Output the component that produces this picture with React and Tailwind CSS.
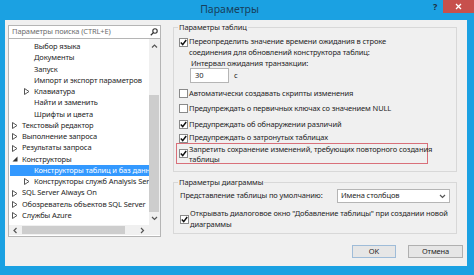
import React from "react";

const font = { fontFamily: '"Noto Sans", "Open Sans", sans-serif' };

const Check = ({ checked }) => (
  <span className="w-[9px] h-[9px] border border-[#8a8a8a] bg-white flex items-center justify-center shrink-0">
    {checked && (
      <svg width="7" height="7" viewBox="0 0 7 7">
        <path d="M0.8 3.6 L2.7 5.6 L6.2 1" stroke="#111" strokeWidth="1.5" fill="none" />
      </svg>
    )}
  </span>
);

const Arrow = ({ type, selected }) => {
  if (type === "closed")
    return (
      <svg width="6" height="7" viewBox="0 0 6 7">
        <path d="M0.5 0.5 L5 3.5 L0.5 6.5 Z" fill="none" stroke={selected ? "#fff" : "#555"} strokeWidth="1" />
      </svg>
    );
  if (type === "open")
    return (
      <svg width="6" height="6" viewBox="0 0 6 6">
        <path d="M5.5 0.5 L5.5 5.5 L0.5 5.5 Z" fill="#333" />
      </svg>
    );
  return null;
};

const rows = [
  { t: "Выбор языка", l: 2 },
  { t: "Документы", l: 2 },
  { t: "Запуск", l: 2 },
  { t: "Импорт и экспорт параметров", l: 2 },
  { t: "Клавиатура", l: 2, a: "closed" },
  { t: "Найти и заменить", l: 2 },
  { t: "Шрифты и цвета", l: 2 },
  { t: "Текстовый редактор", l: 1, a: "closed" },
  { t: "Выполнение запроса", l: 1, a: "closed" },
  { t: "Результаты запроса", l: 1, a: "closed" },
  { t: "Конструкторы", l: 1, a: "open" },
  { t: "Конструкторы таблиц и баз данных", l: 2, sel: true },
  { t: "Конструкторы служб Analysis Services", l: 2, a: "closed" },
  { t: "SQL Server Always On", l: 1, a: "closed" },
  { t: "Обозреватель объектов SQL Server", l: 1, a: "closed" },
  { t: "Службы Azure", l: 1, a: "closed" },
];

const Chevron = ({ dir }) => {
  const d = {
    up: "M1 4.5 L3.5 2 L6 4.5",
    down: "M1 2 L3.5 4.5 L6 2",
    left: "M4.5 1 L2 3.5 L4.5 6",
    right: "M2 1 L4.5 3.5 L2 6",
  }[dir];
  return (
    <svg width="7" height="7" viewBox="0 0 7 7">
      <path d={d} stroke="#555" strokeWidth="1.2" fill="none" />
    </svg>
  );
};

export default function App() {
  return (
    <div className="w-[474px] h-[275px] bg-[#1ba1e2] flex flex-col overflow-hidden text-[#1e1e1e] text-[7.5px] tracking-[-0.12px] whitespace-nowrap" style={font}>
      {/* title bar */}
      <div className="h-[20px] flex items-start shrink-0">
        <div className="flex-1 h-[20px] flex items-center justify-center text-[10.5px] tracking-normal text-[#173f5c] pl-[30px]">Параметры</div>
        <div className="w-[12px] h-[14px] flex items-center justify-center text-[9px] font-bold text-[#1b2f40] mr-[2px]">?</div>
        <div className="w-[31px] h-[13px] bg-[#c7504c] flex items-center justify-center">
          <svg width="7" height="7" viewBox="0 0 7 7">
            <path d="M1 1 L6 6 M6 1 L1 6" stroke="#fff" strokeWidth="1.3" />
          </svg>
        </div>
      </div>
      {/* body */}
      <div className="ml-[5px] mr-[7px] h-[246px] bg-[#f0f0f0] flex flex-col">
        <div className="flex">
          {/* left column */}
          <div className="pl-[3px] pt-[5px] w-[156px] flex flex-col">
            <div className="h-[14px] border border-[#b5b5b5] bg-white flex items-center pl-[3px] pr-[2px]">
              <span className="flex-1 text-[#6d6d6d]">Параметры поиска (CTRL+E)</span>
              <svg width="8" height="8" viewBox="0 0 8 8">
                <circle cx="5" cy="3" r="2.2" stroke="#333" strokeWidth="1.1" fill="none" />
                <path d="M3.4 4.6 L0.8 7.2" stroke="#333" strokeWidth="1.3" />
              </svg>
            </div>
            <div className="h-[198px] border border-[#b5b5b5] border-t-0 bg-white flex flex-col">
              <div className="h-[186px] flex">
                <div className="flex-1 overflow-hidden pt-[2px]">
                  {rows.map((r, i) => (
                    <div
                      key={i}
                      className={`h-[11.27px] flex items-center ${r.sel ? "bg-[#3399ff] text-white ml-[1px]" : ""}`}
                    >
                      <span className={r.l === 1 ? "w-[3px] shrink-0" : r.sel ? "w-[14px] shrink-0" : "w-[15px] shrink-0"} />
                      <span className="w-[10px] shrink-0 flex items-center">
                        <Arrow type={r.a} selected={r.sel} />
                      </span>
                      <span>{r.t}</span>
                    </div>
                  ))}
                </div>
                <div className="w-[11px] bg-[#f0f0f0] flex flex-col">
                  <div className="h-[15px] flex items-center justify-center">
                    <Chevron dir="up" />
                  </div>
                  <div className="h-[41px]" />
                  <div className="h-[117px] bg-[#cdcdcd] mr-[1px]" />
                  <div className="flex-1 flex items-center justify-center">
                    <Chevron dir="down" />
                  </div>
                </div>
              </div>
              <div className="h-[10px] flex">
                <div className="flex-1 bg-[#f0f0f0] flex items-center">
                  <div className="w-[13px] flex items-center justify-center">
                    <Chevron dir="left" />
                  </div>
                  <div className="w-[103px] h-[8px] bg-[#cdcdcd]" />
                  <div className="flex-1 flex items-center justify-end pr-[3px]">
                    <Chevron dir="right" />
                  </div>
                </div>
                <div className="w-[11px] bg-[#f0f0f0]" />
              </div>
            </div>
          </div>
          {/* right column */}
          <div className="ml-[12px] w-[284px] pt-[2px] flex flex-col">
            <fieldset className="border border-[#d8d8d8] h-[150px] pl-[5px]">
              <legend className="px-[1px] -ml-[1px] leading-[10px]">Параметры таблиц</legend>
              <div className="mt-[4px] flex items-start">
                <div className="pt-[2px]"><Check checked /></div>
                <div className="ml-[1px] leading-[11px]">
                  <div>Переопределить значение времени ожидания в строке</div>
                  <div>соединения для обновлений конструктора таблиц:</div>
                </div>
              </div>
              <div className="h-[11px] leading-[11px] pl-[12px]">Интервал ожидания транзакции:</div>
              <div className="-mt-[1px] h-[15px] flex items-center pl-[11px]">
                <div className="w-[39px] h-[15px] border border-[#b5b5b5] bg-white flex items-center pl-[4px]">30</div>
                <span className="ml-[5px]">с</span>
              </div>
              <div className="mt-[5px] h-[11px] flex items-center">
                <Check />
                <span className="ml-[1px]">Автоматически создавать скрипты изменения</span>
              </div>
              <div className="mt-[4px] h-[11px] flex items-center">
                <Check />
                <span className="ml-[1px]">Предупреждать о первичных ключах со значением NULL</span>
              </div>
              <div className="mt-[5px] h-[11px] flex items-center">
                <Check checked />
                <span className="ml-[1px]">Предупреждать об обнаружении различий</span>
              </div>
              <div className="mt-[3px] h-[10px] flex items-center">
                <Check checked />
                <span className="ml-[1px]">Предупреждать о затронутых таблицах</span>
              </div>
              <div className="-ml-[3px] w-[252px] h-[21px] border border-[#d9707a] flex items-center pl-[2px]">
                <Check checked />
                <div className="ml-[1px] leading-[10px]">
                  <div>Запретить сохранение изменений, требующих повторного создания</div>
                  <div>таблицы</div>
                </div>
              </div>
            </fieldset>
            <fieldset className="mt-[5px] border border-[#d8d8d8] h-[57px] pl-[6px]">
              <legend className="px-[1px] -ml-[2px] leading-[10px]">Параметры диаграммы</legend>
              <div className="mt-[2px] h-[14px] flex items-center">
                <span className="flex-1">Представление таблицы по умолчанию:</span>
                <div className="w-[113px] h-[14px] border border-[#b5b5b5] bg-white flex items-center pl-[3px] pr-[3px] mr-[6px]">
                  <span className="flex-1">Имена столбцов</span>
                  <Chevron dir="down" />
                </div>
              </div>
              <div className="mt-[5px] flex items-center">
                <Check checked />
                <div className="ml-[1px] leading-[11px]">
                  <div>Открывать диалоговое окно "Добавление таблицы" при создании новой</div>
                  <div>диаграммы</div>
                </div>
              </div>
            </fieldset>
          </div>
        </div>
        <div className="mt-[8px] flex justify-end pr-[4px] gap-[12px]">
          <div className="w-[44px] h-[13px] border border-[#9fbcd8] bg-[#e6e6e6] flex items-center justify-center">OK</div>
          <div className="w-[55px] h-[13px] border border-[#b0b0b0] bg-[#e6e6e6] flex items-center justify-center">Отмена</div>
        </div>
      </div>
    </div>
  );
}
